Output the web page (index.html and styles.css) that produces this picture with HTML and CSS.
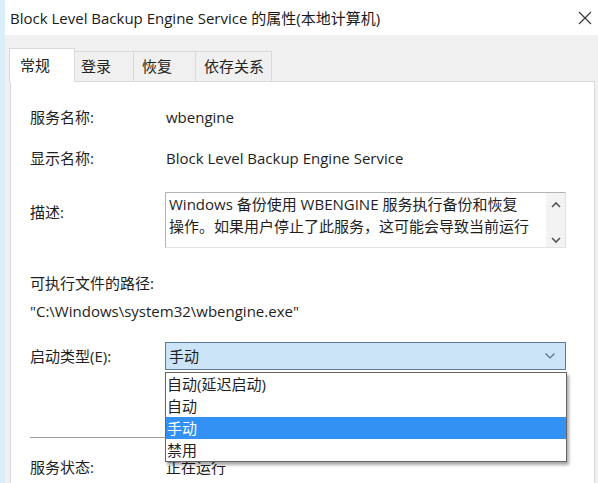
FILE: index.html
```html
<!DOCTYPE html>
<html lang="zh-CN">
<head>
<meta charset="utf-8">
<title>Block Level Backup Engine Service 的属性(本地计算机)</title>
<link rel="stylesheet" href="styles.css">
</head>
<body>
<div class="window">
  <div class="titlebar">
    <span class="title">Block Level Backup Engine Service 的属性(本地计算机)</span>
    <svg class="close" width="14" height="14" viewBox="0 0 14 14"><path d="M1 1 L13 13 M13 1 L1 13" stroke="#333" stroke-width="1.1" fill="none"/></svg>
  </div>
  <div class="tabs">
    <div class="tab active">常规</div>
    <div class="tab">登录</div>
    <div class="tab">恢复</div>
    <div class="tab">依存关系</div>
  </div>
  <div class="panel">
    <div class="row r1"><div class="label">服务名称:</div><div class="value">wbengine</div></div>
    <div class="row r2"><div class="label">显示名称:</div><div class="value">Block Level Backup Engine Service</div></div>
    <div class="row r3">
      <div class="label desc-label">描述:</div>
      <div class="textbox">
        <div class="tb-text">Windows 备份使用 WBENGINE 服务执行备份和恢复<br>操作。如果用户停止了此服务，这可能会导致当前运行</div>
        <div class="tb-scroll">
          <svg width="10" height="8" viewBox="0 0 10 8"><path d="M1 6 L5 2 L9 6" stroke="#555" stroke-width="1.6" fill="none"/></svg>
          <svg width="10" height="8" viewBox="0 0 10 8"><path d="M1 2 L5 6 L9 2" stroke="#555" stroke-width="1.6" fill="none"/></svg>
        </div>
      </div>
    </div>
    <div class="row r4"><div class="label wide">可执行文件的路径:</div></div>
    <div class="row r5"><div class="path">"C:\Windows\system32\wbengine.exe"</div></div>
    <div class="row r6">
      <div class="label">启动类型(E):</div>
      <div class="combo-wrap">
        <div class="combo">
          <span>手动</span>
          <svg width="12" height="8" viewBox="0 0 12 8"><path d="M1.5 1.5 L6 6 L10.5 1.5" stroke="#5f6f80" stroke-width="1.2" fill="none"/></svg>
        </div>
        <ul class="list">
          <li>自动(延迟启动)</li>
          <li>自动</li>
          <li class="sel">手动</li>
          <li>禁用</li>
        </ul>
      </div>
    </div>
    <div class="sep"></div>
    <div class="row r7"><div class="label">服务状态:</div><div class="value">正在运行</div></div>
  </div>
</div>
</body>
</html>
```

FILE: styles.css
```css
* { box-sizing: border-box; }
html, body { margin: 0; padding: 0; }
body {
  width: 598px;
  height: 483px;
  overflow: hidden;
  font-family: "Open Sans", "Noto Sans CJK SC", sans-serif;
  font-size: 15px;
  color: #1e1e1e;
}
.window {
  width: 598px;
  height: 483px;
  background: #f0f0f0;
  border-left: 5px solid #d9eefa;
  overflow: hidden;
}
.titlebar {
  height: 35px;
  background: #fff;
  display: flex;
  align-items: center;
  justify-content: space-between;
  padding: 0 6px 0 5px;
}
.title { font-size: 15px; line-height: 20px; color: #1a1a1a; }
.tabs {
  display: flex;
  align-items: flex-end;
  height: 46px;
  padding-left: 4px;
  position: relative;
  z-index: 1;
}
.tab {
  height: 30px;
  line-height: 28px;
  border: 1px solid #d9d9d9;
  border-bottom: none;
  border-left: none;
  background: #f0f0f0;
  color: #222;
  white-space: nowrap;
}
.tab:nth-child(2) { width: 59px; padding-left: 6px; }
.tab:nth-child(3) { width: 62px; padding-left: 8px; }
.tab:nth-child(4) { width: 76px; padding-left: 8px; }
.tab.active {
  width: 66px;
  height: 34px;
  line-height: 32px;
  background: #fff;
  border-left: 1px solid #d9d9d9;
  margin-bottom: -1px;
  padding-left: 10px;
}
.panel {
  margin-left: 5px;
  width: 585px;
  height: 420px;
  background: #fff;
  border: 1px solid #d9d9d9;
  padding: 0 0 0 19px;
}
.row { display: flex; line-height: 22px; }
.label { width: 135px; flex: none; }
.value { padding-left: 1px; }
.r1 { margin-top: 24px; }
.r2 { margin-top: 19px; }
.r3 { margin-top: 23px; }
.desc-label { padding-top: 9px; }
.textbox {
  width: 401px;
  height: 56px;
  border: 1px solid #b4b4b4;
  border-right-color: #e2e2e2;
  border-bottom-color: #e2e2e2;
  display: flex;
}
.tb-text {
  flex: 1;
  padding: 0 4px 0 3px;
  line-height: 22px;
  overflow: hidden;
  white-space: nowrap;
}
.tb-scroll {
  width: 19px;
  flex: none;
  background: #f3f3f3;
  display: flex;
  flex-direction: column;
  justify-content: space-between;
  align-items: center;
  padding: 8px 0 3px;
}
.r4 { margin-top: 24px; }
.wide { width: auto; }
.r5 { margin-top: 6px; }
.r6 { margin-top: 20px; align-items: center; }
.combo-wrap { position: relative; }
.combo {
  width: 401px;
  height: 28px;
  background: #cce4f7;
  border: 1px solid #5a7c9c;
  display: flex;
  align-items: center;
  justify-content: space-between;
  padding: 0 9px 0 3px;
}
.list {
  position: absolute;
  left: 0;
  top: 30px;
  width: 402px;
  margin: 0;
  padding: 0;
  list-style: none;
  background: #fff;
  border: 1px solid #666;
  box-shadow: 2px 3px 3px rgba(0,0,0,0.35);
  z-index: 2;
}
.list li { height: 22px; line-height: 22px; padding-left: 1px; }
.list li.sel { background: #3391f4; color: #fff; }
.sep {
  margin-top: 67px;
  width: 536px;
  height: 1px;
  background: #a0a0a0;
}
.r7 { margin-top: 18px; }
```
